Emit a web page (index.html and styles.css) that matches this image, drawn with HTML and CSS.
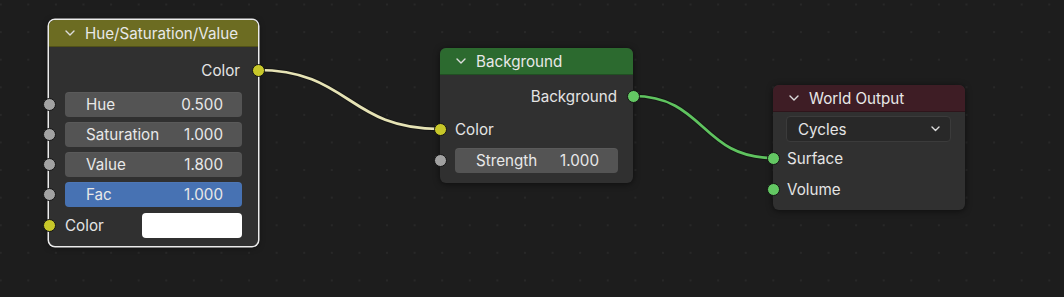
FILE: index.html
```html
<!DOCTYPE html>
<html lang="en">
<head>
    <meta charset="UTF-8">
    <title>Node Editor</title>
    <link rel="stylesheet" href="styles.css">
</head>
<body>
    <div class="canvas">
        <svg class="links" width="1064" height="297">
            <path class="link-edge" d="M257 70 C 350 70, 347 129, 440 129"/>
            <path class="link link-color" d="M257 70 C 350 70, 347 129, 440 129"/>
            <path class="link-edge" d="M633 96 C 705 96, 701 158, 773 158"/>
            <path class="link link-shader" d="M633 96 C 705 96, 701 158, 773 158"/>
        </svg>

        <!-- Hue/Saturation/Value -->
        <div class="node node-hsv selected">
            <div class="node-header header-color">
                <svg class="chevron" width="10" height="6" viewBox="0 0 10 6"><polyline points="1,1 5,5 9,1"/></svg>
                <span>Hue/Saturation/Value</span>
            </div>
            <div class="node-body">
                <div class="row row-out">
                    <span>Color</span>
                    <i class="socket out yellow"></i>
                </div>
                <div class="fields">
                    <div class="row">
                        <i class="socket in gray"></i>
                        <div class="slider"><span>Hue</span><span>0.500</span></div>
                    </div>
                    <div class="row">
                        <i class="socket in gray"></i>
                        <div class="slider"><span>Saturation</span><span>1.000</span></div>
                    </div>
                    <div class="row">
                        <i class="socket in gray"></i>
                        <div class="slider"><span>Value</span><span>1.800</span></div>
                    </div>
                    <div class="row">
                        <i class="socket in gray"></i>
                        <div class="slider slider-fac"><span>Fac</span><span>1.000</span></div>
                    </div>
                </div>
                <div class="row row-color">
                    <i class="socket in yellow"></i>
                    <span class="label">Color</span>
                    <div class="swatch"></div>
                </div>
            </div>
        </div>

        <!-- Background -->
        <div class="node node-bg">
            <div class="node-header header-shader">
                <svg class="chevron" width="10" height="6" viewBox="0 0 10 6"><polyline points="1,1 5,5 9,1"/></svg>
                <span>Background</span>
            </div>
            <div class="node-body">
                <div class="row row-out">
                    <span>Background</span>
                    <i class="socket out green"></i>
                </div>
                <div class="row row-in">
                    <i class="socket in yellow"></i>
                    <span class="label">Color</span>
                </div>
                <div class="row row-strength">
                    <i class="socket in gray"></i>
                    <div class="slider"><span>Strength</span><span>1.000</span></div>
                </div>
            </div>
        </div>

        <!-- World Output -->
        <div class="node node-world">
            <div class="node-header header-output">
                <svg class="chevron" width="10" height="6" viewBox="0 0 10 6"><polyline points="1,1 5,5 9,1"/></svg>
                <span>World Output</span>
            </div>
            <div class="node-body">
                <div class="dropdown">
                    <span>Cycles</span>
                    <svg class="chevron small" width="9" height="6" viewBox="0 0 9 6"><polyline points="1,1 4.5,4.5 8,1"/></svg>
                </div>
                <div class="row row-in surface">
                    <i class="socket in green"></i>
                    <span class="label">Surface</span>
                </div>
                <div class="row row-in volume">
                    <i class="socket in green"></i>
                    <span class="label">Volume</span>
                </div>
            </div>
        </div>
    </div>
</body>
</html>
```

FILE: styles.css
```css
*{
    margin: 0;
    padding: 0;
    box-sizing: border-box;
}
body{
    width: 1064px;
    height: 297px;
    overflow: hidden;
    background-color: #1d1d1d;
    font-family: Inter, "Noto Sans", sans-serif;
    font-size: 15.2px;
    color: #e4e4e4;
}
.canvas{
    position: relative;
    width: 1064px;
    height: 297px;
    background-color: #1d1d1d;
    background-image: radial-gradient(circle, #282828 0.9px, transparent 1.4px);
    background-size: 27.6px 27.6px;
    background-position: -13.1px -9.3px;
}
.links{
    position: absolute;
    left: 0;
    top: 0;
}
.link-edge{
    fill: none;
    stroke: #151515;
    stroke-width: 4.6;
}
.link{
    fill: none;
    stroke-width: 2.7;
}
.link-color{
    stroke: #e6e3b5;
}
.link-shader{
    stroke: #5fc35f;
}

/* nodes sit on a free canvas */
.node{
    position: absolute;
    background-color: #303030;
    border-radius: 6px;
    box-shadow: 0 1px 6px rgba(0, 0, 0, 0.55);
}
.node.selected{
    box-shadow: 0 0 0 1.5px #ececec, 0 1px 6px rgba(0, 0, 0, 0.55);
}
.node-hsv{
    left: 49px;
    top: 20px;
    width: 209px;
    height: 226px;
}
.node-bg{
    left: 440px;
    top: 48px;
    width: 193px;
    height: 135px;
}
.node-world{
    left: 773px;
    top: 85px;
    width: 192px;
    height: 125px;
}
.node-header{
    height: 27px;
    display: flex;
    align-items: center;
    gap: 10px;
    padding-left: 16px;
    border-radius: 6px 6px 0 0;
    border-bottom: 1px solid rgba(0, 0, 0, 0.25);
    color: #e8e8e8;
}
.header-color{
    background-color: #6c6c22;
}
.header-shader{
    background-color: #2c6a2f;
}
.header-output{
    background-color: #3e1d25;
}
.chevron{
    fill: none;
    stroke: #dcdcdc;
    stroke-width: 1.4;
    stroke-linecap: round;
    stroke-linejoin: round;
    flex-shrink: 0;
}

.node-body{
    display: flex;
    flex-direction: column;
}
.row{
    position: relative;
    height: 26px;
    display: flex;
    align-items: center;
    padding: 0 16px;
}
.row-out{
    justify-content: flex-end;
}
.socket{
    position: absolute;
    top: 50%;
    width: 13px;
    height: 13px;
    margin-top: -6.5px;
    border-radius: 50%;
    border: 1px solid #141414;
}
.socket.in{
    left: -6.5px;
}
.socket.out{
    right: -6.5px;
}
.yellow{
    background-color: #c7c729;
}
.gray{
    background-color: #a1a1a1;
}
.green{
    background-color: #63c763;
}

.slider{
    flex: 1;
    height: 25px;
    display: flex;
    justify-content: space-between;
    align-items: center;
    padding: 0 19px 0 21px;
    background-color: #545454;
    border-radius: 4px;
    box-shadow: inset 0 1px 0 rgba(255, 255, 255, 0.04);
    color: #e8e8e8;
}
.slider-fac{
    background-color: #4772b3;
}
.label{
    flex: 1;
}

/* Hue/Saturation/Value spacing */
.node-hsv .row-out{
    margin-top: 10px;
    padding-right: 18px;
}
.node-hsv .fields{
    margin-top: 9px;
    display: flex;
    flex-direction: column;
    gap: 5px;
}
.node-hsv .fields .row{
    height: 25px;
}
.row-color{
    margin-top: 6px;
    height: 25px;
}
.swatch{
    width: 100px;
    height: 25px;
    background-color: #ffffff;
    border-radius: 4px;
}

/* Background spacing */
.node-bg .row-out{
    margin-top: 8px;
    padding-right: 16px;
}
.node-bg .row-in{
    margin-top: 7px;
    padding-left: 15px;
}
.row-strength{
    margin-top: 6px;
    height: 25px;
    padding: 0 15px;
}

/* World Output spacing */
.dropdown{
    margin: 4px 14px 0 13px;
    height: 26px;
    display: flex;
    align-items: center;
    justify-content: space-between;
    padding: 0 10px 0 11px;
    background-color: #282828;
    border: 1px solid #3b3b3b;
    border-radius: 4px;
}
.surface{
    margin-top: 3px;
    padding-left: 14px;
}
.volume{
    margin-top: 5px;
    padding-left: 14px;
}
```
